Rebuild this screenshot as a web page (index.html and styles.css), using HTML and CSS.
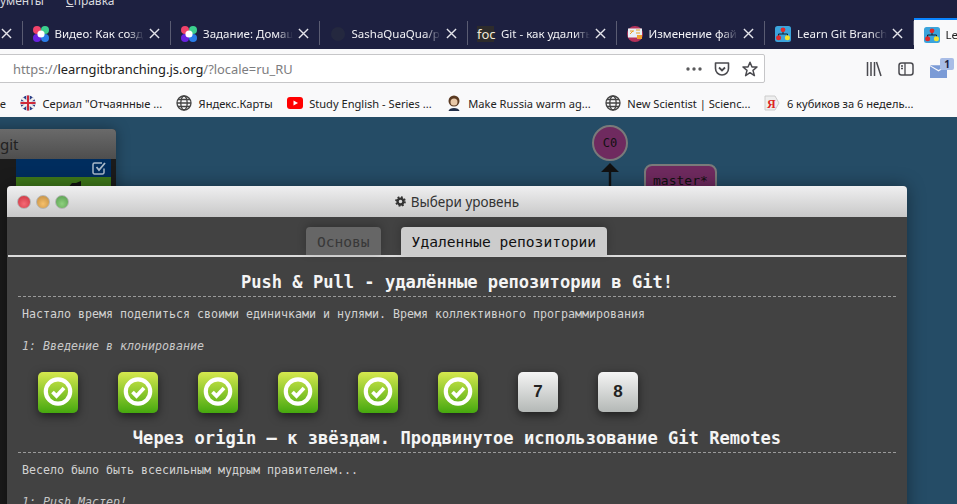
FILE: index.html
```html
<!DOCTYPE html>
<html lang="ru">
<head>
    <meta charset="UTF-8">
    <title>Learn Git Branching</title>
    <link rel="stylesheet" href="styles.css">
</head>
<body>
    <svg class="defs" width="0" height="0">
        <symbol id="i-flower" viewBox="0 0 16 16">
            <circle cx="4" cy="4" r="4" fill="#f0436a"/>
            <circle cx="12" cy="4" r="4" fill="#3ccf8e"/>
            <circle cx="4" cy="12" r="4" fill="#6a22e0"/>
            <circle cx="12" cy="12" r="4" fill="#2a7de8"/>
            <circle cx="8" cy="8" r="3.600" fill="#fff"/>
        </symbol>
        <symbol id="i-tree" viewBox="0 0 16 16">
            <rect width="16" height="16" rx="2.500" fill="#3ba4dc"/>
            <path d="M8 5V8M8 8H3.500V11M8 8H12.500V11" stroke="#123" fill="none"/>
            <circle cx="8" cy="3.800" r="2.400" fill="#e02a2a"/>
            <circle cx="3.600" cy="11.800" r="2.500" fill="#e02a2a"/>
            <circle cx="12.400" cy="11.800" r="2.500" fill="#f2e32c"/>
        </symbol>
        <symbol id="i-globe" viewBox="0 0 16 16">
            <g fill="none" stroke="#444" stroke-width="1.300">
                <circle cx="8" cy="8" r="7"/>
                <ellipse cx="8" cy="8" rx="3.200" ry="7"/>
                <path d="M1 8H15M2 4.500H14M2 11.500H14"/>
            </g>
        </symbol>
        <symbol id="i-close" viewBox="0 0 12 12">
            <path d="M1 1L11 11M11 1L1 11" fill="none" stroke="#e4e4ea" stroke-width="1.500"/>
        </symbol>
        <symbol id="i-check" viewBox="0 0 40 41">
            <circle cx="20" cy="19.500" r="12.200" fill="none" stroke="#fff" stroke-width="4.200"/>
            <path d="M14.500 20L18.500 24L26 16" fill="none" stroke="#fff" stroke-width="3.800"/>
        </symbol>
    </svg>

    <!-- Browser chrome -->
    <div class="menu-bar"><span>рументы</span><span><u>С</u>правка</span></div>

    <div class="tab-bar">
        <div class="tab"><span class="tab-title"></span><svg class="tab-close"><use href="#i-close"/></svg></div>
        <div class="tab">
            <svg class="favicon"><use href="#i-flower"/></svg>
            <span class="tab-title">Видео: Как созда</span><svg class="tab-close"><use href="#i-close"/></svg>
        </div>
        <div class="tab">
            <svg class="favicon"><use href="#i-flower"/></svg>
            <span class="tab-title">Задание: Домаш</span><svg class="tab-close"><use href="#i-close"/></svg>
        </div>
        <div class="tab">
            <svg class="favicon" viewBox="0 0 16 16"><circle cx="8" cy="8" r="7" fill="#24283f"/></svg>
            <span class="tab-title">SashaQuaQua/pr</span><svg class="tab-close"><use href="#i-close"/></svg>
        </div>
        <div class="tab">
            <span class="favicon favicon-foc">foc</span>
            <span class="tab-title">Git - как удалить</span><svg class="tab-close"><use href="#i-close"/></svg>
        </div>
        <div class="tab">
            <svg class="favicon" viewBox="0 0 16 16">
                <circle cx="8" cy="8" r="8" fill="#b5325a"/>
                <rect x="1" y="2.500" width="14" height="9" fill="#e9f1f6"/>
                <path d="M3 5H7M3 8L6 5M9 4H13M9 7H13" stroke="#e8a020"/>
                <rect x="10" y="9" width="5" height="4" fill="#f0a030"/>
            </svg>
            <span class="tab-title">Изменение фай</span><svg class="tab-close"><use href="#i-close"/></svg>
        </div>
        <div class="tab">
            <svg class="favicon"><use href="#i-tree"/></svg>
            <span class="tab-title">Learn Git Branch</span><svg class="tab-close"><use href="#i-close"/></svg>
        </div>
        <div class="tab tab-active">
            <svg class="favicon"><use href="#i-tree"/></svg>
            <span class="tab-title">Learn</span>
        </div>
    </div>

    <div class="nav-bar">
        <div class="url-box">
            <span class="url"><span class="url-dim">https://</span>learngitbranching.js.org<span class="url-dim">/?locale=ru_RU</span></span>
            <div class="url-actions">
                <svg class="tool" viewBox="0 0 16 16"><g fill="#5a5a5c"><circle cx="2" cy="8" r="1.700"/><circle cx="8" cy="8" r="1.700"/><circle cx="14" cy="8" r="1.700"/></g></svg>
                <svg class="tool" viewBox="0 0 16 16"><path d="M1.500 2H14.500V7.500A6.500 6.500 0 0 1 1.500 7.500Z" fill="none" stroke="#4a4a4f" stroke-width="1.600" stroke-linejoin="round"/><path d="M5 6.500L8 9.500L11 6.500" fill="none" stroke="#4a4a4f" stroke-width="1.800"/></svg>
                <svg class="tool" viewBox="0 0 16 16"><path d="M8 1.200L10 6H15L11 9.400L12.400 14.600L8 11.700L3.600 14.600L5 9.400L1 6H6Z" fill="none" stroke="#4a4a4f" stroke-width="1.500" stroke-linejoin="round"/></svg>
            </div>
        </div>
        <div class="nav-tools">
            <svg class="tool" viewBox="0 0 16 16"><path d="M1.500 1V15M5 1V15M8.500 1V15M10.500 1L15 15" stroke="#4a4a4f" stroke-width="1.500" fill="none"/></svg>
            <svg class="tool" viewBox="0 0 16 16"><rect x="1" y="2" width="14" height="12" rx="2.500" fill="none" stroke="#4a4a4f" stroke-width="1.500"/><path d="M7 2V14M3 5H5M3 7.500H5" stroke="#4a4a4f" stroke-width="1.300"/></svg>
            <div class="mail">
                <svg class="mail-icon" viewBox="0 0 16 12"><path d="M0 1L8 6L16 1V12H0Z" fill="#7b9bd6"/><path d="M0 0H16L8 4.500Z" fill="#7b9bd6"/></svg>
                <span class="mail-badge">1</span>
            </div>
        </div>
    </div>

    <div class="bookmarks">
        <div class="bookmark bookmark-cut"><span>le</span></div>
        <div class="bookmark">
            <svg class="favicon" viewBox="0 0 16 16"><circle cx="8" cy="8" r="7.500" fill="#2b3f87"/><path d="M2 3L14 13M14 3L2 13" stroke="#eee" stroke-width="2.500"/><path d="M8 .5V15.500M.5 8H15.500" stroke="#eee" stroke-width="3.500"/><path d="M8 .5V15.500M.5 8H15.500" stroke="#cf2a3a" stroke-width="2"/></svg>
            <span>Сериал "Отчаянные ...</span>
        </div>
        <div class="bookmark"><svg class="favicon"><use href="#i-globe"/></svg><span>Яндекс.Карты</span></div>
        <div class="bookmark">
            <svg class="favicon" viewBox="0 0 16 16"><rect y="2" width="16" height="12" rx="3" fill="#f00"/><path d="M6.500 5.500L11 8L6.500 10.500Z" fill="#fff"/></svg>
            <span>Study English - Series ...</span>
        </div>
        <div class="bookmark">
            <svg class="favicon" viewBox="0 0 16 16"><circle cx="8" cy="6" r="5.500" fill="#5a3a22"/><circle cx="8" cy="7" r="3.500" fill="#e8c8a8"/><path d="M2.500 16C3 12 13 12 13.500 16Z" fill="#22304a"/></svg>
            <span>Make Russia warm ag...</span>
        </div>
        <div class="bookmark"><svg class="favicon"><use href="#i-globe"/></svg><span>New Scientist | Scienc...</span></div>
        <div class="bookmark">
            <svg class="favicon" viewBox="0 0 16 16"><path d="M1 1H11L15 8L11 15H1Z" fill="#eee" stroke="#ccc"/><text class="ya" x="3" y="13">Я</text></svg>
            <span>6 кубиков за 6 недель...</span>
        </div>
    </div>

    <!-- Page -->
    <div class="page">
        <div class="cmd-panel">
            <div class="cmd-head"><span>git</span></div>
            <div class="cmd-body">
                <div class="cmd-row cmd-blue">
                    <svg class="cmd-check" viewBox="0 0 16 16"><path d="M13 8.500V12.500A1.500 1.500 0 0 1 11.500 14H3.500A1.500 1.500 0 0 1 2 12.500V4.500A1.500 1.500 0 0 1 3.500 3H11" fill="none" stroke="#a9b9c9" stroke-width="1.500"/><path d="M5.500 7L8 10L14 3" fill="none" stroke="#a9b9c9" stroke-width="1.800"/></svg>
                </div>
                <div class="cmd-row cmd-green">
                    <svg class="cmd-icon" viewBox="0 0 14 8"><path d="M0 8L5 2H9L14 0V8Z" fill="#111"/></svg>
                </div>
            </div>
        </div>

        <div class="commit">C0</div>
        <svg class="commit-arrow" viewBox="0 0 20 24"><path d="M10 1L19 10H11.200V24H8.800V10H1Z" fill="#111"/></svg>
        <div class="branch">master*</div>

        <div class="modal">
            <div class="modal-title">
                <div class="lights">
                    <span class="light light-red"></span>
                    <span class="light light-amber"></span>
                    <span class="light light-green"></span>
                </div>
                <svg class="gear" viewBox="0 0 16 16">
                    <circle cx="8" cy="8" r="4.300" fill="none" stroke="#333" stroke-width="3.400"/>
                    <circle cx="8" cy="8" r="6.500" fill="none" stroke="#333" stroke-width="2.600" stroke-dasharray="2.600 2.500"/>
                </svg>
                <span class="modal-name">Выбери уровень</span>
            </div>
            <div class="modal-body">
                <div class="level-tabs">
                    <div class="level-tab">Основы</div>
                    <div class="level-tab level-tab-on">Удаленные репозитории</div>
                </div>

                <div class="sequence">
                    <h2 class="seq-title">Push &amp; Pull - удалённые репозитории в Git!</h2>
                    <p class="seq-about">Настало время поделиться своими единичками и нулями. Время коллективного программирования</p>
                    <p class="seq-level">1: Введение в клонирование</p>
                    <div class="levels">
                        <div class="level level-done"><svg class="level-check"><use href="#i-check"/></svg></div>
                        <div class="level level-done"><svg class="level-check"><use href="#i-check"/></svg></div>
                        <div class="level level-done"><svg class="level-check"><use href="#i-check"/></svg></div>
                        <div class="level level-done"><svg class="level-check"><use href="#i-check"/></svg></div>
                        <div class="level level-done"><svg class="level-check"><use href="#i-check"/></svg></div>
                        <div class="level level-done"><svg class="level-check"><use href="#i-check"/></svg></div>
                        <div class="level">7</div>
                        <div class="level">8</div>
                    </div>
                </div>

                <div class="sequence">
                    <h2 class="seq-title">Через origin — к звёздам. Продвинутое использование Git Remotes</h2>
                    <p class="seq-about">Весело было быть всесильным мудрым правителем...</p>
                    <p class="seq-level">1: Push Мастер!</p>
                </div>
            </div>
        </div>
    </div>
</body>
</html>
```

FILE: styles.css
```css
html, body {
    height: 100%;
}
body {
    margin: 0;
    overflow: hidden;
    display: flex;
    flex-direction: column;
    font-family: "Noto Sans", "Open Sans", sans-serif;
    background-color: #254c66;
}
.defs {
    position: absolute;
}
.favicon {
    width: 16px;
    height: 16px;
    flex: none;
}

/* browser chrome */
.menu-bar {
    height: 18px;
    flex: none;
    overflow: hidden;
    display: flex;
    gap: 22px;
    margin-left: -7px;
    background-color: #1d2040;
    color: #d8d8de;
    font-size: 12px;
    line-height: 2px;
}
.tab-bar {
    height: 31px;
    flex: none;
    display: flex;
    margin-left: -126px;
    background-color: #1d2040;
}
.tab {
    width: 148.5px;
    box-sizing: border-box;
    flex: none;
    display: flex;
    align-items: center;
    padding: 0 9px 0 10px;
    position: relative;
    color: #f0f0f4;
    font-size: 11.500px;
}
.tab::after {
    content: "";
    position: absolute;
    right: 0;
    top: 3px;
    height: 24px;
    width: 1px;
    background-color: #5a5c72;
}
.tab-title {
    flex: 1;
    min-width: 0;
    margin-left: 6px;
    white-space: nowrap;
    overflow: hidden;
    -webkit-mask-image: linear-gradient(to right, #000 82%, transparent);
    mask-image: linear-gradient(to right, #000 82%, transparent);
}
.tab-close {
    width: 11px;
    height: 11px;
    flex: none;
    margin: 0 2px 0 5px;
}
.favicon-foc {
    width: 17px;
    background-color: #2d2b2b;
    color: #f0e8d8;
    font-size: 13px;
    line-height: 16px;
    margin-left: -1px;
    margin-right: 1px;
}
.tab-active {
    background-color: #f9f9fa;
    border-top: 2px solid #0a84ff;
    color: #222;
}
.tab-active::after {
    display: none;
}
.nav-bar {
    height: 35px;
    flex: none;
    box-sizing: border-box;
    padding-top: 4px;
    display: flex;
    align-items: center;
    background-color: #f9f9fa;
}
.url-box {
    width: 773px;
    height: 29px;
    box-sizing: border-box;
    margin-left: -8px;
    padding: 0 6px 0 20px;
    display: flex;
    align-items: center;
    justify-content: space-between;
    background-color: #fff;
    border: 1px solid #c6c6c8;
    border-radius: 2px;
    font-size: 12.900px;
    color: #222;
}
.url-dim {
    color: #7d7d80;
}
.url-actions {
    display: flex;
    gap: 12px;
}
.tool {
    width: 16px;
    height: 16px;
    flex: none;
}
.nav-tools {
    margin-left: 101px;
    display: flex;
    align-items: center;
    gap: 16px;
}
.mail {
    position: relative;
    width: 24px;
    height: 20px;
}
.mail-icon {
    position: absolute;
    left: 0;
    top: 6px;
    width: 17px;
    height: 13px;
}
.mail-badge {
    position: absolute;
    right: 0;
    top: -1px;
    width: 14px;
    height: 12px;
    border-radius: 2px;
    background-color: #a9bde6;
    color: #1d2040;
    font-size: 10px;
    font-weight: 700;
    line-height: 12px;
    text-align: center;
}
.bookmarks {
    height: 33px;
    flex: none;
    box-sizing: border-box;
    padding-top: 5px;
    display: flex;
    align-items: center;
    gap: 14px;
    margin-left: -3px;
    background-color: #f9f9fa;
    font-size: 11.100px;
    color: #222;
    white-space: nowrap;
}
.bookmark {
    display: flex;
    align-items: center;
    gap: 6.500px;
}
.bookmark-cut {
    width: 9px;
}
.ya {
    font-family: "Liberation Serif", serif;
    font-size: 12px;
    font-weight: 700;
    fill: #d22;
}

/* page behind the modal */
.page {
    flex: 1;
    position: relative;
    background-color: #254c66;
}
.cmd-panel {
    position: absolute;
    left: -40px;
    top: 12px;
    width: 156px;
    height: 500px;
    border-radius: 4px;
    overflow: hidden;
    background-color: #1b1b1b;
    box-shadow: 0 0 14px rgba(0, 0, 0, 0.35);
}
.cmd-head {
    height: 30px;
    padding-left: 40px;
    background: linear-gradient(#6a6a6a, #4e4e4e);
    font-size: 15px;
    line-height: 30px;
    color: #222;
}
.cmd-body {
    margin: 0 5px 0 56px;
}
.cmd-row {
    height: 18px;
    display: flex;
    justify-content: flex-end;
    align-items: center;
}
.cmd-blue {
    background-color: #002d5e;
}
.cmd-green {
    height: 30px;
    align-items: flex-start;
    justify-content: flex-start;
    background-color: #3f7a1a;
}
.cmd-check {
    width: 16px;
    height: 16px;
    margin-right: 4px;
}
.cmd-icon {
    width: 14px;
    height: 8px;
    margin: 4px 0 0 51px;
}
.commit {
    position: absolute;
    left: 592px;
    top: 8px;
    width: 32px;
    height: 32px;
    border: 2px solid #7a7a7a;
    border-radius: 50%;
    background-color: #6f2a5f;
    color: #111;
    font: 12px/32px "DejaVu Sans Mono", monospace;
    text-align: center;
}
.commit-arrow {
    position: absolute;
    left: 600px;
    top: 45px;
    width: 20px;
    height: 24px;
}
.branch {
    position: absolute;
    left: 644px;
    top: 47px;
    width: 62px;
    height: 40px;
    padding-left: 7px;
    border: 2px solid #7a7a7a;
    border-radius: 8px;
    background-color: #6f2a5f;
    color: #111;
    font: 13px/30px "DejaVu Sans Mono", monospace;
}

/* level picker */
.modal {
    position: absolute;
    left: 7px;
    top: 69px;
    width: 900px;
    height: 500px;
    border-radius: 4px 4px 0 0;
    overflow: hidden;
    background-color: #424242;
    box-shadow: 0 0 18px rgba(0, 0, 0, 0.4);
    font-family: "DejaVu Sans Mono", monospace;
}
.modal-title {
    height: 31px;
    display: flex;
    align-items: center;
    justify-content: center;
    gap: 5px;
    position: relative;
    background: linear-gradient(#efeff0, #c8c8c8);
    color: #333;
    font-family: "Noto Sans", sans-serif;
    font-size: 13.500px;
}
.gear {
    width: 11px;
    height: 11px;
}
.lights {
    position: absolute;
    left: 10px;
    top: 9px;
    display: flex;
    gap: 5px;
}
.light {
    width: 14px;
    height: 14px;
    box-sizing: border-box;
    border: 1px solid #b4b4b4;
    border-radius: 50%;
}
.light-red {
    background: radial-gradient(circle at 50% 65%, #f56a75, #c92f3c);
}
.light-amber {
    background: radial-gradient(circle at 50% 65%, #f6c06c, #be8a3e);
}
.light-green {
    background: radial-gradient(circle at 50% 65%, #8ed07e, #549a4c);
}
.modal-body {
    color: #dedede;
}
.level-tabs {
    height: 38px;
    margin: 0 1px;
    display: flex;
    align-items: flex-end;
    justify-content: center;
    gap: 20px;
    padding-right: 1px;
    border-bottom: 2px solid #dcdcdc;
    font-size: 14.600px;
}
.level-tab {
    height: 28px;
    box-sizing: border-box;
    padding: 0 11px;
    border-radius: 4px 4px 0 0;
    background-color: #666;
    color: #383838;
    line-height: 29px;
    box-shadow: 0 -2px 8px rgba(0, 0, 0, 0.25);
}
.level-tab-on {
    background-color: #ccc;
    color: #111;
}
.sequence {
    padding: 0 11px;
}
.seq-title {
    margin: 0;
    height: 40px;
    box-sizing: border-box;
    padding-top: 14px;
    border-bottom: 1px dashed #9a9a9a;
    text-align: center;
    font-size: 17.100px;
    line-height: 22px;
    font-weight: 700;
    color: #f4f4f4;
    white-space: nowrap;
}
.seq-about {
    margin: 0;
    padding: 10px 4px 0;
    font-size: 11.630px;
    line-height: 14px;
    color: #d2d2d2;
    white-space: nowrap;
}
.seq-level {
    margin: 0;
    padding: 18px 4px 0;
    font-size: 11.630px;
    line-height: 14px;
    font-style: italic;
    color: #c8c8c8;
    white-space: nowrap;
}
.levels {
    display: flex;
    align-items: flex-start;
    gap: 40px;
    padding: 19px 0 0 20px;
}
.level {
    width: 40px;
    height: 40px;
    border-radius: 5px;
    display: flex;
    align-items: center;
    justify-content: center;
    background: linear-gradient(#f4f4f4, #b4b8b6);
    box-shadow: 0 3px 10px rgba(0, 0, 0, 0.55);
    color: #222;
    font-family: "Liberation Sans", sans-serif;
    font-size: 17px;
    font-weight: 700;
}
.level-done {
    height: 41px;
    background: linear-gradient(#d6e84e, #45a80e);
}
.level-check {
    width: 40px;
    height: 41px;
}
```
